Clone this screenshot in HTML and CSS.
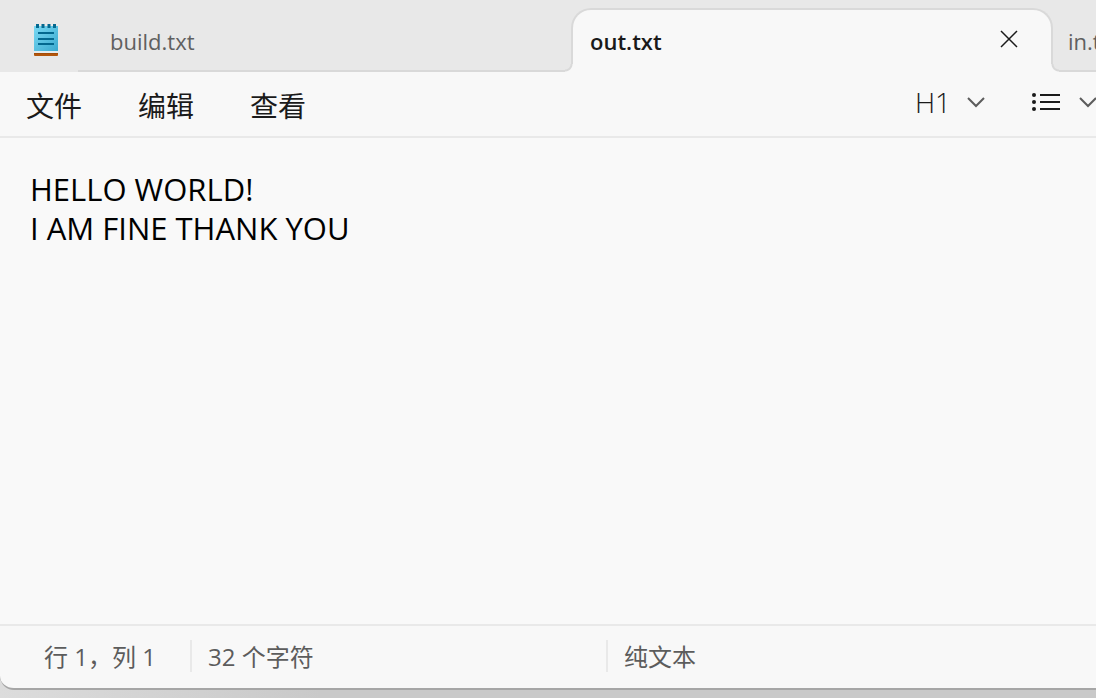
FILE: index.html
```html
<!DOCTYPE html>
<html lang="zh-CN">
<head>
<meta charset="utf-8">
<title>out.txt</title>
<link rel="stylesheet" href="styles.css">
</head>
<body>
<div class="window">
  <header class="titlebar">
    <svg class="app-icon" width="26" height="34" viewBox="0 0 26 34" aria-hidden="true">
      <defs>
        <linearGradient id="paper" x1="0" y1="0" x2="1" y2="1">
          <stop offset="0" stop-color="#7ad9f3"/>
          <stop offset="1" stop-color="#3aa9cf"/>
        </linearGradient>
      </defs>
      <path fill="#b3560c" d="M1 28h24v4q0 1-1 1H2q-1 0-1-1z"/>
      <path fill="#8a3e08" d="M1 30h24v1H1z" opacity=".4"/>
      <path fill="#e3ecef" d="M1 27h24v3H1z"/>
      <path fill="url(#paper)" d="M1 3h24v25H1z"/>
      <path stroke="#03688f" stroke-width="3" d="M4.500 1v4M10 1v4M16 1v4M21.500 1v4"/>
      <path stroke="#03688f" stroke-width="2" d="M5 10h16M5 16h16M5 21h16"/>
    </svg>
    <nav class="tabs" aria-label="标签页">
      <button class="tab" type="button">build.txt</button>
      <div class="tab tab-active">
        <span>out.txt</span>
        <button class="close" type="button" aria-label="关闭">
          <svg width="18" height="18" viewBox="0 0 18 18"><path d="M1 1l16 16M17 1L1 17"/></svg>
        </button>
      </div>
      <button class="tab tab-next" type="button">in.txt</button>
    </nav>
  </header>
  <div class="toolbar">
    <nav class="menus" aria-label="菜单">
      <button type="button">文件</button>
      <button type="button">编辑</button>
      <button type="button">查看</button>
    </nav>
    <div class="formats">
      <button class="format" type="button">
        <span class="heading-label">H1</span>
        <svg width="18" height="12" viewBox="0 0 18 12" aria-hidden="true"><path class="chevron" d="M1 2l8 8 8-8"/></svg>
      </button>
      <button class="format format-list" type="button" aria-label="列表">
        <svg width="30" height="20" viewBox="0 0 30 20">
          <g fill="#1a1a1a"><circle cx="3" cy="3" r="2"/><circle cx="3" cy="10" r="2"/><circle cx="3" cy="17" r="2"/></g>
          <path d="M9 3h20M9 10h20M9 17h20"/>
        </svg>
        <svg width="18" height="12" viewBox="0 0 18 12"><path class="chevron" d="M1 2l8 8 8-8"/></svg>
      </button>
    </div>
  </div>
  <textarea class="editor" aria-label="文本编辑器" spellcheck="false">HELLO WORLD!
I AM FINE THANK YOU</textarea>
  <footer class="statusbar">
    <span class="status position">行 1，列 1</span>
    <span class="status count">32 个字符</span>
    <span class="status kind">纯文本</span>
  </footer>
</div>
</body>
</html>
```
FILE: styles.css
```css
* {
  box-sizing: border-box;
}

body {
  margin: 0;
  height: 100vh;
  padding-bottom: 8px;
  overflow: hidden;
  background: linear-gradient(90deg, #dcdcdc, #c9c9c9 320px);
  color: #1a1a1a;
  font-family: "Open Sans", "Noto Sans CJK SC", sans-serif;
}

button {
  margin: 0;
  padding: 0;
  border: 0;
  background: none;
  color: inherit;
  font: inherit;
  text-align: left;
}

svg {
  display: block;
  flex: none;
  fill: none;
  stroke: none;
}

.window {
  display: flex;
  flex-direction: column;
  height: 100%;
  overflow: hidden;
  border-bottom: 2px solid #a6a6a6;
  border-bottom-left-radius: 14px;
  background: #f8f8f8;
}

.titlebar {
  display: flex;
  height: 72px;
  background: #e8e8e8;
}

.app-icon {
  margin: 23px 19px 0 33px;
}

.tabs {
  display: flex;
  flex: 1;
  min-width: 0;
  padding-top: 8px;
}

.tab {
  flex: 1 0 0;
  padding: 4px 32px 0;
  border-bottom: 2px solid #d9d9d9;
  color: #606060;
  font-size: 22px;
}

.tab-active {
  position: relative;
  display: flex;
  align-items: center;
  justify-content: space-between;
  flex: 0 0 482px;
  padding: 0 33px 0 17px;
  border: 2px solid #d9d9d9;
  border-bottom: 0;
  border-radius: 20px 20px 0 0;
  background: #f8f8f8;
  color: #1a1a1a;
  font-weight: 600;
}

.tab-active::before,
.tab-active::after {
  content: "";
  position: absolute;
  bottom: 0;
  width: 8px;
  height: 8px;
}

.tab-active::before {
  left: -8px;
  background: radial-gradient(circle at 0 0, #e8e8e8 5px, #d9d9d9 6px 7px, #f8f8f8 8px);
}

.tab-active::after {
  right: -8px;
  background: radial-gradient(circle at 100% 0, #e8e8e8 5px, #d9d9d9 6px 7px, #f8f8f8 8px);
}

.tab-next {
  flex: 0 0 43px;
  padding: 4px 0 0 15px;
  overflow: hidden;
  white-space: nowrap;
}

.close {
  padding-bottom: 4px;
}

.close svg,
.format svg {
  stroke: #1a1a1a;
  stroke-width: 2;
}

.close svg {
  stroke-width: 1.5;
}

.format g {
  stroke: none;
}

.format .chevron {
  stroke: #5c5c5c;
}

.toolbar {
  display: flex;
  justify-content: space-between;
  height: 66px;
  border-bottom: 2px solid #e9e9e9;
}

.menus {
  display: flex;
  gap: 56px;
  padding: 2px 0 0 26px;
  font-size: 28px;
}

.formats {
  display: flex;
  gap: 46px;
  margin-right: -1px;
}

.format {
  display: flex;
  align-items: center;
  gap: 16px;
  padding-bottom: 4px;
}

.format-list {
  gap: 18px;
}

.heading-label {
  font-size: 28px;
  font-weight: 300;
}

.editor {
  flex: 1;
  min-height: 0;
  padding: 32px 30px;
  border: 0;
  outline: 0;
  resize: none;
  background: #f9f9f9;
  color: #000;
  font-family: "Open Sans", sans-serif;
  font-size: 31px;
  line-height: 39px;
}

.statusbar {
  display: flex;
  align-items: center;
  height: 64px;
  padding-bottom: 2px;
  border-top: 2px solid #e9e9e9;
  color: #5c5c5c;
  font-size: 24px;
}

.status {
  height: 32px;
  line-height: 34px;
  white-space: nowrap;
}

.position {
  width: 190px;
  padding-left: 44px;
}

.count {
  width: 416px;
}

.count,
.kind {
  padding-left: 16px;
  border-left: 2px solid #e9e9e9;
}
```
